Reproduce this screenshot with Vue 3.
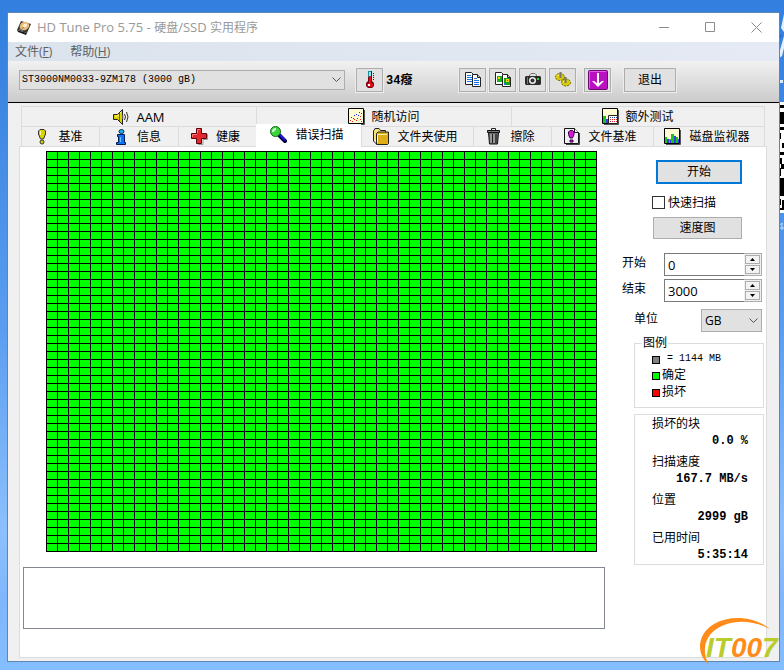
<script setup>
import { ref } from 'vue'

const COLS = 50
const ROWS = 50
const colLines = Array.from({ length: COLS + 1 }, (_, i) => `M${i * 11 + 0.5} 0V401`).join('')
const rowLines = Array.from({ length: ROWS + 1 }, (_, i) => `M0 ${i * 8 + 0.5}H551`).join('')

const upperTabs = [
  { id: 'aam', label: 'AAM' },
  { id: 'random', label: '随机访问' },
  { id: 'extra', label: '额外测试' },
]
const lowerTabs = [
  { id: 'bench', label: '基准' },
  { id: 'info', label: '信息' },
  { id: 'health', label: '健康' },
  { id: 'scan', label: '错误扫描' },
  { id: 'folder', label: '文件夹使用' },
  { id: 'erase', label: '擦除' },
  { id: 'filebench', label: '文件基准' },
  { id: 'monitor', label: '磁盘监视器' },
]
const activeTab = ref('scan')

const quick = ref(false)
const start = ref(0)
const end = ref(3000)
const stats = [
  { label: '损坏的块', value: '0.0 %' },
  { label: '扫描速度', value: '167.7 MB/s' },
  { label: '位置', value: '2999 gB' },
  { label: '已用时间', value: '5:35:14' },
]
</script>

<template>
  <div class="desktop">
    <svg class="wall" width="5" height="230" viewBox="0 0 5 230" aria-hidden="true">
      <path d="M5 14L2 28L5 32ZM5 36L1 50L0 58L3 56L5 48Z" fill="#e4effc" />
      <path d="M3 34L0 40V37Z" fill="#1c4a8c" />
      <path d="M1 80h3v3h-3z" fill="#dcecff" />
      <path d="M0 102h5v111h-5z" fill="#fff" />
      <path d="M0 105h5v3h-5zM0 112h5v12h-5zM0 127h5v3h-5zM0 133h2v6h-2zM3 143h2v5h-2zM0 152h5v3h-5zM0 158h3v6h-3zM2 164h3v5h-3zM0 168h2v8h-2zM1 178h4v18h-4zM0 186h5v6h-5zM0 199h2v6h-2zM3 200h2v8h-2zM0 208h5v2h-5z" fill="#000" />
      <path d="M0 225l4-2M1 228h4M3 224v6" stroke="#bfe0ff" fill="none" />
    </svg>

    <main class="window">
      <header class="titlebar">
        <svg class="app-icon" width="16" height="16" viewBox="0 0 16 16" aria-hidden="true">
          <path d="M5 1L15 4L11 13L1 10Z" fill="#3a3634" />
          <path d="M1 10L11 13L10 15L2 12Z" fill="#1c1a1a" />
          <ellipse cx="8.500" cy="6" rx="5" ry="4" transform="rotate(-25 8.500 6)" fill="#e7bb7c" />
          <ellipse cx="9" cy="5.500" rx="2.300" ry="1.600" transform="rotate(-25 9 5.500)" fill="#fff1d6" />
          <path d="M3 9l4 2M5 10l3-3" stroke="#8a8380" fill="none" />
        </svg>
        <h1>HD Tune Pro 5.75 - <span>硬盘</span>/SSD <span>实用程序</span></h1>
        <div class="caption">
          <button type="button" aria-label="最小化">
            <svg width="11" height="11" viewBox="0 0 11 11"><path d="M0 5.500H10" /></svg>
          </button>
          <button type="button" aria-label="最大化">
            <svg width="11" height="11" viewBox="0 0 11 11"><path d="M.5 .5H9.500V9.500H.5Z" /></svg>
          </button>
          <button type="button" aria-label="关闭">
            <svg width="11" height="11" viewBox="0 0 11 11"><path d="M.5 .5L10.500 10.500M10.500 .5L.5 10.500" /></svg>
          </button>
        </div>
      </header>

      <nav class="menubar">
        <button type="button">文件(<u>F</u>)</button>
        <button type="button">帮助(<u>H</u>)</button>
      </nav>

      <div class="toolbar">
        <span class="drop drive">
          <select aria-label="硬盘"><option>ST3000NM0033-9ZM178 (3000 gB)</option></select>
          <svg width="9" height="6" viewBox="0 0 9 6"><path d="M.5 .5L4.500 4.500L8.500 .5" /></svg>
        </span>
        <button class="tool" type="button" aria-label="温度">
          <svg width="18" height="18" viewBox="0 0 18 18">
            <path d="M7 0h4v10l2 2v3l-2 2h-4l-2-2v-3l2-2z" fill="#7b0010" />
            <path d="M7 0h3v6h-3z" fill="#1d8e9b" /><path d="M8 1h2v5h-2z" fill="#8fe9ef" />
            <path d="M8 5h2v7l2 1v2l-1 1h-3l-2-1v-2l2-1z" fill="#e60e1c" />
            <path d="M7 13h2v2h-2z" fill="#fff" /><path d="M12 2.500h1M12 4.500h1M12 6.500h1M12 8.500h1" stroke="#222" />
          </svg>
        </button>
        <output class="temp">34癈</output>
        <div class="actions">
          <button class="tool" type="button" aria-label="复制文本">
            <svg width="18" height="18" viewBox="0 0 18 18">
              <path d="M1.500 1.500h6l3 3v9h-9z" fill="#fff" stroke="#222" />
              <path d="M3 4.500h4M3 6.500h5M3 8.500h5M3 10.500h5" stroke="#1673e6" />
              <path d="M8.500 3.500h5l3 3v9h-8z" fill="#fff" stroke="#222" />
              <path d="M13.500 3.500v3h3" fill="#bbb" stroke="#222" />
              <path d="M10 7.500h3M10 9.500h5M10 11.500h5M10 13.500h5" stroke="#1673e6" />
            </svg>
          </button>
          <button class="tool" type="button" aria-label="复制图像">
            <svg width="18" height="18" viewBox="0 0 18 18">
              <path d="M1.500 1.500h6l3 3v9h-9z" fill="#fff" stroke="#222" />
              <path d="M3 5h5v6h-5z" fill="#13b21e" /><path d="M4 6h2v2h-2z" fill="#f6d500" />
              <path d="M8.500 3.500h5l3 3v9h-8z" fill="#fff" stroke="#222" />
              <path d="M13.500 3.500v3h3" fill="#bbb" stroke="#222" />
              <path d="M10 7h6v7h-6z" fill="#13a51e" /><path d="M12 8h3v3h-3z" fill="#f6d500" /><path d="M13 9h1v1h-1z" fill="#e21" /><path d="M10 12h2v2h-2z" fill="#1673e6" />
            </svg>
          </button>
          <button class="tool" type="button" aria-label="截图">
            <svg width="18" height="18" viewBox="0 0 18 18">
              <path d="M5.500 6V4L7 2.500h4L12.500 4V6" fill="none" stroke="#777" />
              <path d="M2 5h14l1 1v7l-1 1h-14l-1-1v-7z" fill="#2a2a2a" />
              <path d="M3.500 6v7" stroke="#777" />
              <circle cx="8.500" cy="9.500" r="3.500" fill="#eee" /><circle cx="8.500" cy="9.500" r="2" fill="#333" />
              <path d="M13 7h2v2h-2z" fill="#1adb2e" />
            </svg>
          </button>
          <button class="tool" type="button" aria-label="选项">
            <svg width="18" height="18" viewBox="0 0 18 18">
              <ellipse cx="6" cy="6" rx="4.500" ry="3.500" fill="#d8cb0a" stroke="#6d6600" stroke-dasharray="2 1" />
              <ellipse cx="12" cy="11.500" rx="4.500" ry="3.500" fill="#d8cb0a" stroke="#6d6600" stroke-dasharray="2 1" />
              <path d="M3 5l2-1M9 11l2-1" stroke="#fff45c" />
              <path d="M6.500 1v6M11.500 6v6" stroke="#777" stroke-width="2" />
            </svg>
          </button>
          <button class="tool save" type="button" aria-label="保存">
            <svg width="20" height="20" viewBox="0 0 20 20">
              <rect x=".5" y=".5" width="19" height="19" rx="1" fill="#b911c0" stroke="#6d0873" />
              <path d="M1.500 18V1.500H18" fill="none" stroke="#e05ce6" />
              <path d="M10 3v11" stroke="#fff" stroke-width="2" /><path d="M4 11h2l4 3l4-3h2l-6 6z" fill="#fff" />
            </svg>
          </button>
          <button class="exit" type="button">退出</button>
        </div>
      </div>

      <div class="body">
        <div class="tabs" role="tablist">
          <div class="row upper">
            <button v-for="t in upperTabs" :key="t.id" class="tab" type="button" role="tab" :aria-selected="activeTab === t.id">
              <svg v-if="t.id === 'aam'" width="17" height="16" viewBox="0 0 17 16">
                <path d="M.5 5.500h4L9.500 .5v15l-5-5h-4z" fill="#d9d000" stroke="#222" />
                <path d="M2 7h3l3-4" stroke="#fffb8a" fill="none" /><path d="M6.500 4v8" stroke="#6c6700" />
                <path d="M11.500 5q2 3 0 6M13.500 3q3 5 0 10" stroke="#333" fill="none" /><path d="M10 6v4" stroke="#999" />
              </svg>
              <svg v-else-if="t.id === 'random'" width="17" height="17" viewBox="0 0 17 17">
                <path d="M2 16.500h14.500V2" stroke="#555" fill="none" />
                <path d="M.5 .5h15v15h-15z" fill="#fffbd2" stroke="#000" />
                <path d="M3 9h1v1h-1zM5 10h1v1h-1zM6 7h1v1h-1zM8 6h1v1h-1zM10 7h1v1h-1zM11 4h1v1h-1zM13 5h1v1h-1z" fill="#2a2adf" />
                <path d="M2 12h1v1h-1zM4 13h1v1h-1zM6 11h1v1h-1zM8 12h1v1h-1zM9 10h1v1h-1zM12 11h1v1h-1zM12 8h1v1h-1zM13 13h1v1h-1z" fill="#e22" />
              </svg>
              <svg v-else width="17" height="17" viewBox="0 0 17 17">
                <path d="M2 16.500h14.500V2" stroke="#555" fill="none" />
                <path d="M.5 .5h15v15h-15z" fill="#fffbd2" stroke="#000" />
                <path d="M1 8h3v7h-3z" fill="#18c818" /><path d="M4 11h2v4h-2z" fill="#3a3af0" />
                <path d="M6.500 7.500h9v8h-9z" fill="#fff" stroke="#222" />
                <path d="M8 9.500h7" stroke="#223a9c" stroke-dasharray="1 1" />
                <path d="M8 11.500h7M8 13.500h7" stroke="#d22" stroke-dasharray="1 1" />
              </svg>
              <span>{{ t.label }}</span>
            </button>
          </div>
          <div class="row lower">
            <button v-for="t in lowerTabs" :key="t.id" class="tab" :class="{ active: activeTab === t.id }" type="button" role="tab" :aria-selected="activeTab === t.id">
              <svg v-if="t.id === 'bench'" width="16" height="16" viewBox="0 0 16 16">
                <path d="M6 .5h4l1.500 1.500v3L9.500 10h-3L4.500 5V2z" fill="#d9d400" stroke="#333" />
                <path d="M6.500 2v4" stroke="#fffb9c" />
                <circle cx="8" cy="13" r="2" fill="#d9d400" stroke="#333" />
              </svg>
              <svg v-else-if="t.id === 'info'" width="16" height="16" viewBox="0 0 16 16">
                <path d="M4.500 5.500h7v8h1v2h-9v-2h2v-6h-1z" fill="#1470f5" stroke="#001b55" />
                <path d="M7.500 8v5" stroke="#60c8ff" />
                <ellipse cx="8.500" cy="2.500" rx="2.500" ry="2" fill="#25a9f5" stroke="#003055" />
              </svg>
              <svg v-else-if="t.id === 'health'" width="17" height="17" viewBox="0 0 17 17">
                <path d="M7 16.500h5v-5h4.500V6" stroke="#999" fill="none" />
                <path d="M5.500 .5h5v5h5v5h-5v5h-5v-5h-5v-5h5z" fill="#e3272d" stroke="#5c0007" />
                <path d="M6.500 5V1.500H9M1.500 9V6.500H6" stroke="#ff7d7d" fill="none" />
              </svg>
              <svg v-else-if="t.id === 'scan'" width="17" height="17" viewBox="0 0 17 17">
                <path d="M9 9l6 6" stroke="#000044" stroke-width="4" stroke-linecap="round" />
                <path d="M10 9l5 5" stroke="#1c1ce0" stroke-width="2" />
                <circle cx="5.500" cy="5.500" r="5" fill="#3bd53b" stroke="#14611a" />
                <path d="M3 6q0-3 3-3" stroke="#d5ffd5" stroke-width="2" fill="none" />
              </svg>
              <svg v-else-if="t.id === 'folder'" width="16" height="17" viewBox="0 0 16 17">
                <path d="M.5 13V3L2 .5h4L7.500 2.500h5V5" fill="#f5e277" stroke="#222" />
                <path d="M3.500 5.500L5 4h10.500v11.500l-1 1H3.500z" fill="#dfae16" stroke="#222" />
                <path d="M4.500 15V6.500H14" stroke="#fff3a8" fill="none" /><path d="M.5 13l3 3" stroke="#222" />
              </svg>
              <svg v-else-if="t.id === 'erase'" width="16" height="17" viewBox="0 0 16 17">
                <path d="M5.500 2V.5h4V2" stroke="#222" fill="none" />
                <path d="M1.500 2.500h12v2h-12z" fill="#777" stroke="#111" />
                <path d="M2.500 4.500h10l-1 11.500h-8z" fill="#666" stroke="#111" />
                <path d="M5 6v9M8 6v9" stroke="#c8c8c8" /><path d="M6.500 6v9M10 6v9" stroke="#222" />
              </svg>
              <svg v-else-if="t.id === 'filebench'" width="16" height="17" viewBox="0 0 16 17">
                <path d="M2 16.500h13.500V5" stroke="#444" fill="none" />
                <path d="M.5 .5h10l4 4v11h-14z" fill="#eeeef5" stroke="#111" /><path d="M10.500 .5v4h4" fill="#fff" stroke="#111" />
                <path d="M6 2.500h2.500L10 4v2.500L8.500 10h-2.500L4.500 6.500V4z" fill="#d01ad8" stroke="#400044" />
                <path d="M6 12h3v2h-3z" fill="#d01ad8" stroke="#400044" />
              </svg>
              <svg v-else width="17" height="17" viewBox="0 0 17 17">
                <path d="M2 16.500h14.500V2" stroke="#555" fill="none" />
                <path d="M.5 .5h15v15h-15z" fill="#fffbd2" stroke="#000" />
                <path d="M1 9h2v6h-2zM5 11h2v4h-2zM7 6h3v9h-3zM12 9h2v6h-2z" fill="#18c818" />
                <path d="M3 11h2v4h-2zM6 12h1v3h-1zM10 8h2v7h-2zM14 11h1v4h-1z" fill="#3a3af0" />
              </svg>
              <span>{{ t.label }}</span>
            </button>
          </div>
        </div>

        <section class="panel">
          <div class="left">
            <svg class="map" viewBox="0 0 551 401" shape-rendering="crispEdges" role="img" aria-label="错误扫描">
              <rect width="551" height="401" fill="#00ff00" />
              <path :d="colLines + rowLines" stroke="#000" fill="none" />
            </svg>
            <textarea class="log" aria-label="日志" readonly></textarea>
          </div>

          <aside class="side">
            <div class="run">
              <button class="primary" type="button">开始</button>
              <label class="check"><input v-model="quick" type="checkbox" />快速扫描</label>
              <button class="map-btn" type="button">速度图</button>
            </div>

            <div class="fields">
              <label for="from">开始</label>
              <div class="spin">
                <input id="from" v-model="start" type="number" />
                <span>
                  <button type="button" aria-label="增加" @click="start++"><svg width="5" height="3" viewBox="0 0 5 3"><path d="M0 3L2.500 0L5 3Z" /></svg></button>
                  <button type="button" aria-label="减少" @click="start--"><svg width="5" height="3" viewBox="0 0 5 3"><path d="M0 0L2.500 3L5 0Z" /></svg></button>
                </span>
              </div>
              <label for="to">结束</label>
              <div class="spin">
                <input id="to" v-model="end" type="number" />
                <span>
                  <button type="button" aria-label="增加" @click="end++"><svg width="5" height="3" viewBox="0 0 5 3"><path d="M0 3L2.500 0L5 3Z" /></svg></button>
                  <button type="button" aria-label="减少" @click="end--"><svg width="5" height="3" viewBox="0 0 5 3"><path d="M0 0L2.500 3L5 0Z" /></svg></button>
                </span>
              </div>
            </div>

            <div class="unit">
              <label for="unit">单位</label>
              <span class="drop">
                <select id="unit"><option>GB</option></select>
                <svg width="9" height="6" viewBox="0 0 9 6"><path d="M.5 .5L4.500 4.500L8.500 .5" /></svg>
              </span>
            </div>

            <fieldset class="legend">
              <legend>图例</legend>
              <p class="size"><i class="gray"></i>= 1144 MB</p>
              <p><i class="ok"></i>确定</p>
              <p><i class="bad"></i>损坏</p>
            </fieldset>

            <dl class="stats">
              <div v-for="s in stats" :key="s.label">
                <dt>{{ s.label }}</dt>
                <dd>{{ s.value }}</dd>
              </div>
            </dl>
          </aside>
        </section>
      </div>
    </main>

    <svg class="logo" width="84" height="50" viewBox="0 0 84 50" role="img" aria-label="IT007">
      <path d="M9 48C-3 37 -2 18 15 8C32 -2 57 1 71 13C54 4 34 3 19 12C6 20 2 34 10 49Z" fill="#ff8c1a" />
      <text x="7" y="41" fill="#b9cc2b">IT<tspan fill="#ff8c1a">00</tspan>7</text>
    </svg>
  </div>
</template>

<style>
body {
  margin: 0;
}
</style>

<style scoped>
* {
  box-sizing: border-box;
}
.desktop {
  position: relative;
  min-height: 100vh;
  padding: 12px 4px 8px 7px;
  overflow: hidden;
  background: linear-gradient(#327fdf 0, #3d86e2 100px, #5b9ef0 330px, #8cc0fd 530px, #80b6fc 600px, #84beff 100%);
  font: 12px/16px "Open Sans", "Noto Sans CJK SC", sans-serif;
  color: #000;
}
button,
input,
select,
textarea {
  margin: 0;
  padding: 0;
  border: 0;
  border-radius: 0;
  font: inherit;
  color: inherit;
}
svg {
  display: block;
  flex: none;
}
.wall {
  position: absolute;
  top: 0;
  right: 0;
}
.window {
  position: relative;
  border: 1px solid #5f86b0;
  background: #f0f0f0;
}
.titlebar {
  display: flex;
  align-items: center;
  height: 29px;
  padding-left: 8px;
  background: #fff;
}
h1 {
  flex: 1;
  margin: 0 0 0 5px;
  font-size: 13px;
  font-weight: 400;
  color: #999;
}
h1 span {
  font-size: 12px;
}
.caption {
  display: flex;
}
.caption button {
  display: grid;
  place-items: center;
  width: 46px;
  height: 28px;
  background: none;
}
.caption path {
  fill: none;
  stroke: #8c8c8c;
}
.menubar {
  display: flex;
  gap: 18px;
  height: 19px;
  padding-left: 7px;
  background: linear-gradient(90deg, #dbe3ec, #e5eaf4);
}
.menubar button {
  background: none;
  color: #5f5f5f;
}
.toolbar {
  display: flex;
  align-items: center;
  height: 42px;
  padding: 0 103px 4px 11px;
  border-bottom: 1px solid #000;
  background: linear-gradient(#f1f1f1, #cbcbcb);
}
.drop {
  display: grid;
  align-items: center;
}
.drop select,
.drop svg {
  grid-area: 1 / 1;
}
.drop select {
  width: 100%;
  height: 23px;
  padding: 0 3px;
  appearance: none;
  border: 1px solid #adadad;
  background: #e1e1e1;
}
.drop svg {
  justify-self: end;
  margin-right: 4px;
  fill: none;
  stroke: #555;
  pointer-events: none;
}
.drive {
  flex: 1;
  margin-right: 11px;
}
.drop.drive select {
  height: 20px;
  padding: 0 2px;
  font: 10px "Liberation Mono", monospace;
}
.tool,
.exit {
  display: grid;
  place-items: center;
  width: 27px;
  height: 24px;
  border: 1px solid #adadad;
  background: #e1e1e1;
  box-shadow: 0 0 0 1px #ededed;
}
.temp {
  width: 76px;
  padding: 2px 0 0 3px;
  font: bold 12px/16px "Liberation Mono", "Noto Sans CJK SC", monospace;
}
.actions {
  display: flex;
  gap: 3px;
}
.save {
  margin-left: 5px;
}
.exit {
  width: 52px;
  margin-left: 10px;
}
.body {
  padding: 3px 12px 3px 11px;
}
.tabs {
  margin: 0 2px;
}
.row {
  display: grid;
  height: 20px;
}
.upper {
  grid-template-columns: 235fr 255fr 254fr;
}
.upper .tab {
  gap: 6px;
}
.lower {
  grid-template-columns: 78fr 79fr 78fr 105fr 112fr 78fr 102fr 112fr;
}
.tab {
  display: flex;
  align-items: center;
  justify-content: center;
  gap: 8px;
  min-width: 0;
  border: solid #dcdcdc;
  border-width: 1px 0 0 1px;
  background: #f0f0f0;
  white-space: nowrap;
}
.upper .tab:first-child {
  font-size: 13px;
}
.lower .tab {
  padding-right: 4px;
}
.tab:last-child {
  border-right-width: 1px;
}
.lower .active {
  z-index: 1;
  margin: -2px 0 -1px;
  padding-bottom: 3px;
  border-color: #fff;
  background: #fff;
}
.panel {
  display: grid;
  grid-template-columns: minmax(0, 1fr) 142px;
  gap: 17px;
  padding: 4px 2px 28px 3px;
  border: 1px solid #dcdcdc;
  background: #fff;
}
.left {
  display: flex;
  flex-direction: column;
  gap: 15px;
}
.map {
  margin: 0 8px 0 23px;
}
.log {
  display: block;
  height: 62px;
  border: 1px solid #828790;
  background: #fff;
  resize: none;
  outline: 0;
}
.side {
  padding-top: 9px;
}
.run {
  display: grid;
  justify-items: end;
  padding-right: 22px;
}
.run button {
  width: 89px;
  height: 22px;
  border: 1px solid #adadad;
  background: #e1e1e1;
}
.run .primary {
  width: 86px;
  height: 24px;
  border: 2px solid #0078d7;
}
.check {
  display: flex;
  align-items: center;
  gap: 3px;
  width: 90px;
  height: 33px;
  padding-top: 4px;
}
.check input {
  width: 13px;
  height: 13px;
  appearance: none;
  border: 1px solid #333;
  background: #fff;
}
.check input:checked {
  background: #0078d7;
}
.fields {
  display: grid;
  grid-template-columns: 42px minmax(0, 1fr);
  gap: 3px 0;
  align-items: center;
  margin-top: 14px;
  padding-right: 2px;
}
.fields label,
.unit label {
  padding-bottom: 3px;
}
.spin {
  display: flex;
  height: 23px;
}
.spin input {
  flex: 1;
  width: 0;
  min-width: 0;
  padding-left: 3px;
  border: solid #7a7a7a;
  border-width: 1px 0 1px 1px;
  background: #fff;
  font-size: 13px;
  appearance: textfield;
}
.spin span {
  display: grid;
  gap: 1px;
  width: 18px;
  padding: 1px;
  border: solid #adadad;
  border-width: 1px 1px 1px 0;
  background: #f0f0f0;
}
.spin button {
  display: grid;
  place-items: center;
  border: 1px solid #adadad;
  background: #f3f3f3;
}
.unit {
  display: flex;
  align-items: center;
  justify-content: space-between;
  margin-top: 7px;
  padding: 0 2px 0 12px;
}
.unit .drop {
  width: 61px;
}
.legend {
  min-width: 0;
  height: 73px;
  margin: 3px 0 0 12px;
  padding: 0 0 0 17px;
  border: 1px solid #dcdcdc;
}
.legend legend {
  margin-left: -10px;
  padding: 0 1px;
}
.legend p {
  display: flex;
  align-items: center;
  gap: 2px;
  height: 17px;
  margin: 0;
}
.legend .size {
  height: 15px;
  gap: 7px;
  font: 10px "Liberation Mono", monospace;
}
.legend i {
  width: 8px;
  height: 8px;
  margin-top: 2px;
  border: 1px solid #000;
}
.gray {
  background: #808080;
}
.ok {
  background: #00ff00;
}
.bad {
  background: #ff0000;
}
.stats {
  display: grid;
  gap: 4px;
  height: 151px;
  margin: 6px 0 0 12px;
  padding: 1px 15px 0 17px;
  border: 1px solid #dcdcdc;
}
.stats dd {
  margin: 0;
  padding-top: 1px;
  text-align: right;
  white-space: nowrap;
  font: bold 12px/16px "Liberation Mono", monospace;
}
.logo {
  position: absolute;
  right: 1px;
  bottom: 4px;
}
.logo text {
  font: italic bold 28px "Liberation Sans", sans-serif;
}
</style>
